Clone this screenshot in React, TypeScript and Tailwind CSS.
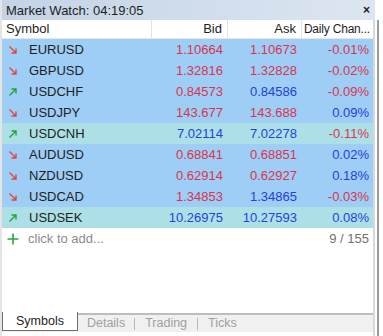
import React from 'react';

type Row = {
  sym: string;
  up: boolean;
  bid: string;
  bidUp: boolean;
  ask: string;
  askUp: boolean;
  chg: string;
  alt?: boolean;
};

const rows: Row[] = [
  { sym: 'EURUSD', up: false, bid: '1.10664', bidUp: false, ask: '1.10673', askUp: false, chg: '-0.01%' },
  { sym: 'GBPUSD', up: false, bid: '1.32816', bidUp: false, ask: '1.32828', askUp: false, chg: '-0.02%' },
  { sym: 'USDCHF', up: true, bid: '0.84573', bidUp: false, ask: '0.84586', askUp: true, chg: '-0.09%' },
  { sym: 'USDJPY', up: false, bid: '143.677', bidUp: false, ask: '143.688', askUp: false, chg: '0.09%' },
  { sym: 'USDCNH', up: true, bid: '7.02114', bidUp: true, ask: '7.02278', askUp: true, chg: '-0.11%', alt: true },
  { sym: 'AUDUSD', up: false, bid: '0.68841', bidUp: false, ask: '0.68851', askUp: false, chg: '0.02%' },
  { sym: 'NZDUSD', up: false, bid: '0.62914', bidUp: false, ask: '0.62927', askUp: false, chg: '0.18%' },
  { sym: 'USDCAD', up: false, bid: '1.34853', bidUp: false, ask: '1.34865', askUp: true, chg: '-0.03%' },
  { sym: 'USDSEK', up: true, bid: '10.26975', bidUp: true, ask: '10.27593', askUp: true, chg: '0.08%', alt: true },
];

const red = 'text-[#d8354f]';
const blue = 'text-[#2440e0]';

const Arrow = ({ up }: { up: boolean }) =>
  up ? (
    <svg width="10" height="10" viewBox="0 0 10 10" className="shrink-0">
      <path d="M1.5 8.5 L8 2 M3.5 2 H8 V6.5" stroke="#21a33a" strokeWidth="1.4" fill="none" />
    </svg>
  ) : (
    <svg width="10" height="10" viewBox="0 0 10 10" className="shrink-0">
      <path d="M1.5 1.5 L8 8 M3.5 8 H8 V3.5" stroke="#e0453f" strokeWidth="1.4" fill="none" />
    </svg>
  );

export default function App() {
  return (
    <div
      className="w-[383px] h-[336px] bg-white flex overflow-hidden text-[13px] text-[#1e1e1e] whitespace-nowrap"
      style={{ fontFamily: '"Liberation Sans", Arial, sans-serif' }}
    >
      <div className="w-[375px] flex flex-col border-l-2 border-[#e4e4e4]">
        <div className="h-[20px] flex items-center justify-between pl-[4px] pr-[5px] bg-gradient-to-r from-[#c4d3e6] to-[#dce6f1]">
          <span className="leading-none">Market Watch: 04:19:05</span>
          <span className="text-[12px] font-bold leading-none">×</span>
        </div>
        <div className="flex-1 flex flex-col border-r-2 border-[#d8d8d8]">
          <div className="h-[19px] flex items-center bg-white border-b border-[#e6e6e6]">
            <div className="w-[150px] pl-[4px] h-full flex items-center border-r border-[#e2e2e2]">Symbol</div>
            <div className="w-[76px] pr-[5px] h-full flex items-center justify-end border-r border-[#e2e2e2]">Bid</div>
            <div className="w-[74px] pr-[5px] h-full flex items-center justify-end border-r border-[#e2e2e2]">Ask</div>
            <div className="flex-1 pr-[3px] h-full flex items-center justify-end overflow-hidden text-[12px] tracking-[-0.2px]">
              Daily Chan...
            </div>
          </div>
          {rows.map((r) => (
            <div
              key={r.sym}
              className={`h-[21px] flex items-center ${r.alt ? 'bg-[#ade0e6]' : 'bg-[#9ecdf5]'}`}
            >
              <div className="w-[150px] pl-[6px] flex items-center gap-[11px]">
                <Arrow up={r.up} />
                <span>{r.sym}</span>
              </div>
              <div className={`w-[76px] pr-[5px] text-right ${r.bidUp ? blue : red}`}>{r.bid}</div>
              <div className={`w-[74px] pr-[5px] text-right ${r.askUp ? blue : red}`}>{r.ask}</div>
              <div className={`flex-1 pr-[4px] text-right ${r.chg.startsWith('-') ? red : blue}`}>{r.chg}</div>
            </div>
          ))}
          <div className="h-[22px] flex items-center justify-between pl-[5px] pr-[4px]">
            <div className="flex items-center gap-[9px]">
              <svg width="12" height="12" viewBox="0 0 12 12">
                <path d="M6 0.5 V11.5 M0.5 6 H11.5" stroke="#2aa63e" strokeWidth="1.6" />
              </svg>
              <span className="text-[#8a8a8a]">click to add...</span>
            </div>
            <span className="text-[#707070]">9 / 155</span>
          </div>
          <div className="flex-1" />
          <div className="h-[2px] bg-[#bdbdbd]" />
          <div className="h-[17px] flex items-end bg-[#f0f0f0] text-[12.5px]">
            <div className="h-[19px] -mt-[2px] flex items-center px-[13px] bg-white border-l border-r border-b border-[#6e6e6e] text-[#1e1e1e] relative -top-[1px]">
              Symbols
            </div>
            <div className="h-full flex items-center text-[#a0a0a0]">
              <span className="px-[9px]">Details</span>
              <span className="w-px h-[12px] bg-[#b8b8b8]" />
              <span className="px-[10px]">Trading</span>
              <span className="w-px h-[12px] bg-[#b8b8b8]" />
              <span className="px-[10px]">Ticks</span>
            </div>
          </div>
          <div className="h-[4px] bg-white" />
        </div>
      </div>
      <div className="flex-1 flex flex-col">
        <div className="h-[20px]" />
        <div className="flex-1 w-[2px] bg-[#9a9a9a] ml-[2px]" />
      </div>
    </div>
  );
}
